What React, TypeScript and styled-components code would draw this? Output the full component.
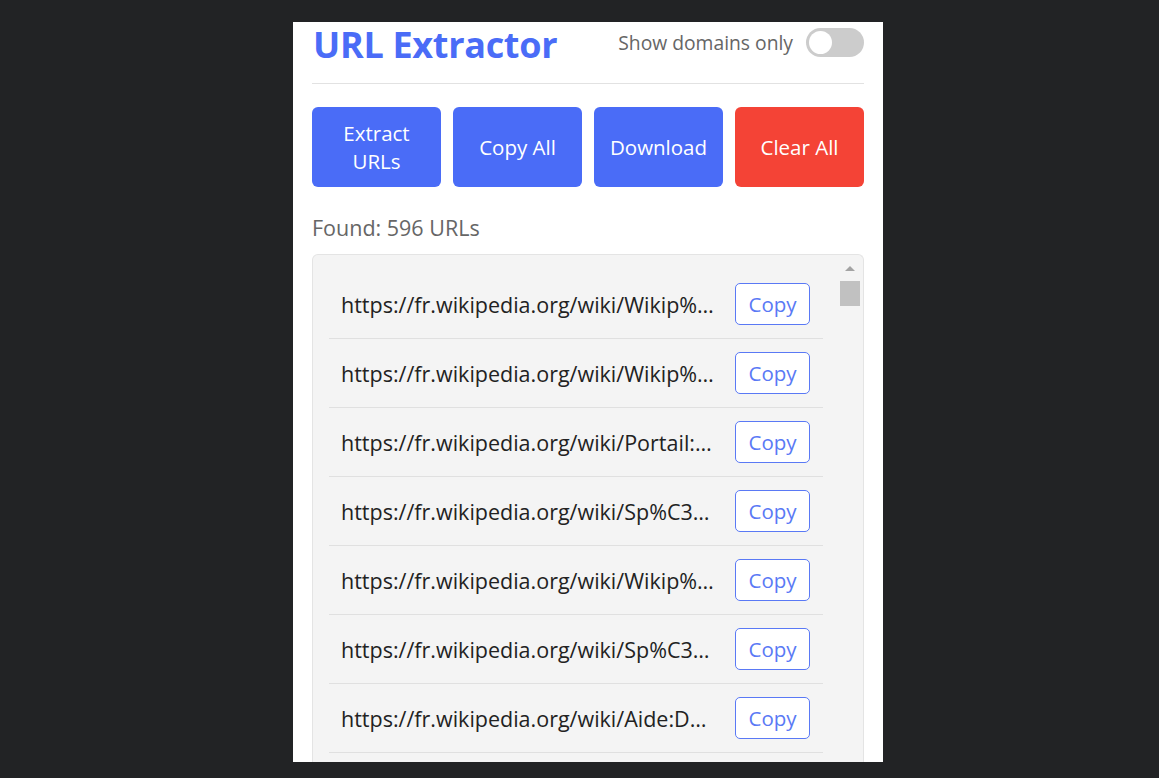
import React from "react";
import styled, { createGlobalStyle } from "styled-components";

const GlobalStyle = createGlobalStyle`
  html, body {
    margin: 0;
    padding: 0;
    background: #222325;
    height: 100%;
    overflow: hidden;
  }
  body {
    font-family: "Open Sans", "Noto Sans", sans-serif;
  }
`;

const Page = styled.div`
  padding: 22px 0 0 293px;
`;

const Panel = styled.div`
  width: 590px;
  height: 740px;
  box-sizing: border-box;
  padding: 0 19px 0 19px;
  background: #ffffff;
`;

const Header = styled.header`
  display: flex;
  align-items: center;
  justify-content: space-between;
  padding: 0 0 15px 1px;
  border-bottom: 1px solid #e2e2e2;
`;

const Title = styled.h1`
  margin: 0;
  font-size: 36px;
  line-height: 46px;
  font-weight: 700;
  color: #4a6cf7;
  letter-spacing: -0.3px;
`;

const ToggleGroup = styled.label`
  display: flex;
  align-items: center;
  gap: 13px;
  margin-bottom: 5px;
  font-size: 19.3px;
  color: #666666;
`;

const Switch = styled.span<{ $on: boolean }>`
  position: relative;
  display: inline-block;
  width: 58px;
  height: 29px;
  border-radius: 15px;
  background: ${(p) => (p.$on ? "#4a6cf7" : "#cccccc")};

  &::after {
    content: "";
    position: absolute;
    top: 3px;
    left: ${(p) => (p.$on ? "32px" : "3px")};
    width: 23px;
    height: 23px;
    border-radius: 50%;
    background: #ffffff;
  }
`;

const Actions = styled.div`
  display: flex;
  gap: 12px;
  margin-top: 23px;
`;

const ActionButton = styled.button<{ $danger?: boolean }>`
  flex: 1;
  height: 80px;
  border: none;
  border-radius: 6px;
  padding: 0 14px;
  background: ${(p) => (p.$danger ? "#f44336" : "#4a6cf7")};
  color: #ffffff;
  font-family: inherit;
  font-size: 20.5px;
  line-height: 28px;
`;

const Found = styled.div`
  margin-top: 27px;
  font-size: 21.5px;
  line-height: 28px;
  color: #666666;
`;

/* the list runs on past the popup's bottom edge, so no bottom border */
const ListBox = styled.div`
  display: flex;
  margin-top: 12px;
  padding: 0 0 0 16px;
  height: 507px;
  background: #f4f4f4;
  border: 1px solid #e4e4e4;
  border-bottom: none;
  border-radius: 6px 6px 0 0;
`;

const Rows = styled.ul`
  list-style: none;
  margin: 0;
  padding: 15px 0 0 0;
  width: 494px;
  overflow: hidden;
`;

const Row = styled.li`
  display: flex;
  align-items: center;
  padding: 13px 13px 13px 12px;
  border-bottom: 1px solid #e0e0e0;
`;

const Url = styled.span`
  flex: 1;
  min-width: 0;
  margin-right: 10px;
  font-size: 21.5px;
  color: #222222;
  white-space: nowrap;
  overflow: hidden;
  text-overflow: ellipsis;
`;

const CopyButton = styled.button`
  width: 75px;
  height: 42px;
  border: 1px solid #5a79f5;
  border-radius: 5px;
  background: #ffffff;
  color: #5a79f5;
  font-family: inherit;
  font-size: 20.5px;
  padding: 0;
`;

const Rail = styled.div`
  display: flex;
  flex-direction: column;
  align-items: center;
  width: 20px;
  margin-left: 17px;
  padding-top: 11px;
`;

const ArrowUp = styled.span`
  width: 0;
  height: 0;
  border-left: 5px solid transparent;
  border-right: 5px solid transparent;
  border-bottom: 5px solid #a3a3a3;
`;

const Thumb = styled.span`
  width: 20px;
  height: 25px;
  margin-top: 10px;
  background: #c1c1c1;
`;

const urls = [
  "https://fr.wikipedia.org/wiki/Wikip%…",
  "https://fr.wikipedia.org/wiki/Wikip%…",
  "https://fr.wikipedia.org/wiki/Portail:…",
  "https://fr.wikipedia.org/wiki/Sp%C3…",
  "https://fr.wikipedia.org/wiki/Wikip%…",
  "https://fr.wikipedia.org/wiki/Sp%C3…",
  "https://fr.wikipedia.org/wiki/Aide:D…",
];

const App: React.FC = () => {
  return (
    <Page>
      <GlobalStyle />
      <Panel>
        <Header>
          <Title>URL Extractor</Title>
          <ToggleGroup>
            Show domains only
            <Switch $on={false} />
          </ToggleGroup>
        </Header>
        <Actions>
          <ActionButton>
            Extract
            <br />
            URLs
          </ActionButton>
          <ActionButton>Copy All</ActionButton>
          <ActionButton>Download</ActionButton>
          <ActionButton $danger>Clear All</ActionButton>
        </Actions>
        <Found>Found: 596 URLs</Found>
        <ListBox>
          <Rows>
            {urls.map((url, i) => (
              <Row key={i}>
                <Url>{url}</Url>
                <CopyButton>Copy</CopyButton>
              </Row>
            ))}
          </Rows>
          <Rail>
            <ArrowUp />
            <Thumb />
          </Rail>
        </ListBox>
      </Panel>
    </Page>
  );
};

export default App;
